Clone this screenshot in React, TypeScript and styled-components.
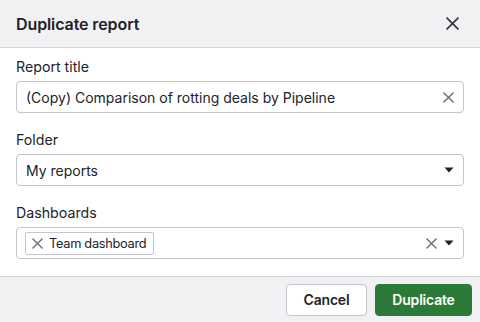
import React from "react";
import styled, { createGlobalStyle } from "styled-components";

const Global = createGlobalStyle`
  html, body { margin: 0; padding: 0; }
  body {
    font-family: Inter, "Noto Sans", sans-serif;
    color: #21232c;
    background: #ffffff;
    -webkit-font-smoothing: antialiased;
  }
`;

const Dialog = styled.div`
  width: 480px;
  height: 322px;
  display: flex;
  flex-direction: column;
  background: #fff;
  overflow: hidden;
`;

const Header = styled.div`
  height: 47px;
  flex: 0 0 auto;
  display: flex;
  align-items: center;
  justify-content: space-between;
  padding: 0 16px;
  background: #f1f1f4;
  border-bottom: 1px solid #d4d5da;
`;

const Title = styled.h1`
  margin: 0;
  font-size: 16px;
  font-weight: 600;
  letter-spacing: -0.1px;
  color: #1f2129;
`;

const IconButton = styled.button`
  border: 0;
  background: transparent;
  padding: 0;
  margin-right: 2px;
  width: 20px;
  height: 20px;
  display: flex;
  align-items: center;
  justify-content: center;
  color: #3b3f47;
  cursor: pointer;
`;

const Body = styled.div`
  flex: 1 1 auto;
  display: flex;
  flex-direction: column;
  gap: 17px;
  padding: 9px 16px 16px;
`;

const Field = styled.div`
  display: flex;
  flex-direction: column;
  gap: 4px;
`;

const Label = styled.label`
  font-size: 14.2px;
  line-height: 20px;
  color: #21232c;
`;

const Control = styled.div<{ $tags?: boolean }>`
  height: 32px;
  box-sizing: border-box;
  border: 1px solid #c3c5cb;
  border-radius: 4px;
  display: flex;
  align-items: center;
  padding: 0 9px 0 ${(p) => (p.$tags ? "8px" : "9px")};
  gap: 8px;
  background: #fff;
`;

const Value = styled.span`
  flex: 1 1 auto;
  font-size: 14px;
  color: #21232c;
  white-space: nowrap;
  overflow: hidden;
`;

const Tags = styled.div`
  flex: 1 1 auto;
  display: flex;
  align-items: center;
`;

const Tag = styled.span`
  height: 23px;
  box-sizing: border-box;
  border: 1px solid #c3c5cb;
  border-radius: 2px;
  display: inline-flex;
  align-items: center;
  gap: 6px;
  padding: 0 7px 0 6px;
  font-size: 12.8px;
  letter-spacing: -0.3px;
  color: #21232c;
`;

const TagRemove = styled.span`
  display: flex;
  color: #6a6d75;
`;

const Actions = styled.div`
  display: flex;
  align-items: center;
  gap: 7px;
  color: #6a6d75;
`;

const Footer = styled.div`
  flex: 0 0 auto;
  height: 46px;
  box-sizing: border-box;
  background: #f1f1f4;
  border-top: 1px solid #d4d5da;
  display: flex;
  align-items: center;
  justify-content: flex-end;
  gap: 8px;
  padding: 0 8px 0 0;
`;

const Button = styled.button<{ $primary?: boolean }>`
  height: 32px;
  box-sizing: border-box;
  padding: 0;
  border-radius: 4px;
  font-family: Inter, "Noto Sans", sans-serif;
  font-size: 14px;
  font-weight: 600;
  letter-spacing: -0.2px;
  cursor: pointer;
  border: 1px solid ${(p) => (p.$primary ? "#2c7a37" : "#c3c5cb")};
  background: ${(p) => (p.$primary ? "#2c7a37" : "#ffffff")};
  color: ${(p) => (p.$primary ? "#ffffff" : "#21232c")};
  width: ${(p) => (p.$primary ? "97px" : "81px")};
`;

const Cross = ({ size = 12, stroke = 1.6 }: { size?: number; stroke?: number }) => (
  <svg width={size} height={size} viewBox="0 0 12 12" fill="none">
    <path d="M1 1L11 11M11 1L1 11" stroke="currentColor" strokeWidth={stroke} strokeLinecap="round" />
  </svg>
);

const Caret = () => (
  <svg width="10" height="6" viewBox="0 0 10 6">
    <path d="M0.5 0.5H9.5L5 5.5Z" fill="#1f2129" />
  </svg>
);

export default function App() {
  return (
    <>
      <Global />
      <Dialog>
        <Header>
          <Title>Duplicate report</Title>
          <IconButton aria-label="Close">
            <Cross size={13} stroke={1.7} />
          </IconButton>
        </Header>
        <Body>
          <Field>
            <Label>Report title</Label>
            <Control>
              <Value>(Copy) Comparison of rotting deals by Pipeline</Value>
              <Actions>
                <Cross size={11} stroke={1.6} />
              </Actions>
            </Control>
          </Field>
          <Field>
            <Label>Folder</Label>
            <Control>
              <Value>My reports</Value>
              <Actions>
                <Caret />
              </Actions>
            </Control>
          </Field>
          <Field>
            <Label>Dashboards</Label>
            <Control $tags>
              <Tags>
                <Tag>
                  <TagRemove>
                    <Cross size={11} stroke={1.5} />
                  </TagRemove>
                  Team dashboard
                </Tag>
              </Tags>
              <Actions>
                <Cross size={11} stroke={1.5} />
                <Caret />
              </Actions>
            </Control>
          </Field>
        </Body>
        <Footer>
          <Button>Cancel</Button>
          <Button $primary>Duplicate</Button>
        </Footer>
      </Dialog>
    </>
  );
}
